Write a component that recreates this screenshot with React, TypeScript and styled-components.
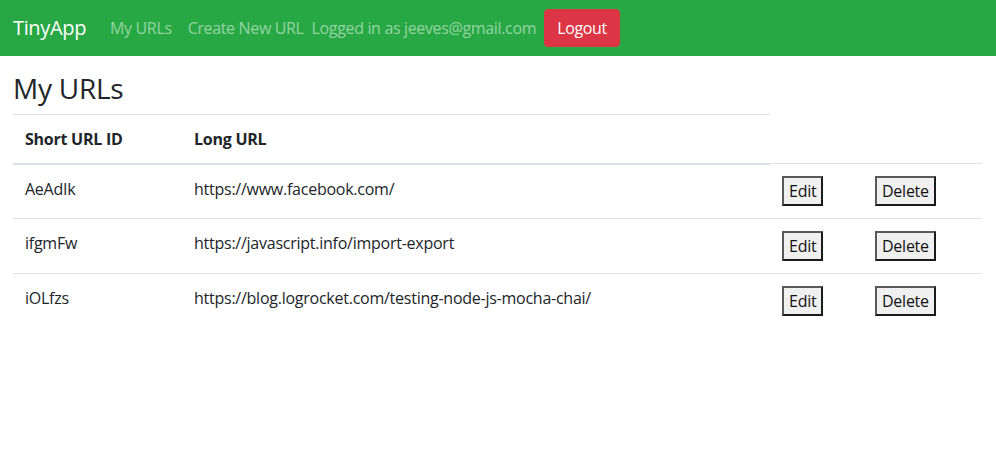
import React from 'react';
import styled, { createGlobalStyle } from 'styled-components';

const GlobalStyle = createGlobalStyle`
  body {
    margin: 0;
    font-family: "Open Sans", "Noto Sans", Arial, sans-serif;
    font-size: 16px;
    line-height: 1.5;
    letter-spacing: -0.25px;
    color: #212529;
    background: #fff;
  }
  * { box-sizing: border-box; }
`;

const Navbar = styled.nav`
  display: flex;
  align-items: center;
  height: 56px;
  padding: 8px 13px;
  background: #28a745;
  letter-spacing: -0.35px;
`;

const Brand = styled.a`
  color: #fff;
  font-size: 20px;
  line-height: 30px;
  margin-right: 16px;
  text-decoration: none;
`;

const NavLink = styled.a`
  color: rgba(255, 255, 255, 0.5);
  padding: 8px;
  line-height: 24px;
  text-decoration: none;
`;

const UserText = styled.span`
  color: rgba(255, 255, 255, 0.5);
  line-height: 24px;
`;

const LogoutButton = styled.button`
  margin-left: 8px;
  height: 38px;
  padding: 6px 12px;
  border: 1px solid #dc3545;
  border-radius: 4px;
  background: #dc3545;
  color: #fff;
  font: inherit;
  letter-spacing: inherit;
  line-height: 24px;
`;

const Main = styled.main`
  padding: 16px 14px 0 13px;
`;

const Heading = styled.h3`
  margin: 0 0 8px;
  font-size: 28px;
  font-weight: 500;
  line-height: 1.2;
`;

const Table = styled.table`
  width: 100%;
  border-collapse: collapse;
  table-layout: fixed;
`;

const HeadCell = styled.th`
  padding: 12px;
  text-align: left;
  font-weight: 700;
  border-top: 1px solid #dee2e6;
  border-bottom: 2px solid #dee2e6;
  vertical-align: bottom;
`;

const Cell = styled.td`
  padding: 12px;
  border-top: 1px solid #dee2e6;
  vertical-align: top;
`;

const PlainButton = styled.button`
  font: inherit;
  letter-spacing: inherit;
  font-size: 16px;
  line-height: 22px;
  padding: 2px 5px;
  background: #f0f0f0;
  color: #111;
  border-style: solid;
  border-width: 2px;
  border-color: #5a5a5a #1a1a1a #1a1a1a #5a5a5a;
  border-radius: 0;
`;

const urls = [
  { id: 'AeAdIk', long: 'https://www.facebook.com/' },
  { id: 'ifgmFw', long: 'https://javascript.info/import-export' },
  { id: 'iOLfzs', long: 'https://blog.logrocket.com/testing-node-js-mocha-chai/' },
];

const App = () => (
  <>
    <GlobalStyle />
    <Navbar>
      <Brand href="#">TinyApp</Brand>
      <NavLink href="#">My URLs</NavLink>
      <NavLink href="#">Create New URL</NavLink>
      <UserText>Logged in as jeeves@gmail.com</UserText>
      <LogoutButton>Logout</LogoutButton>
    </Navbar>
    <Main>
      <Heading>My URLs</Heading>
      <Table>
        <colgroup>
          <col style={{ width: 169 }} />
          <col style={{ width: 588 }} />
          <col style={{ width: 93 }} />
          <col />
        </colgroup>
        <thead>
          <tr>
            <HeadCell>Short URL ID</HeadCell>
            <HeadCell>Long URL</HeadCell>
          </tr>
        </thead>
        <tbody>
          {urls.map((u) => (
            <tr key={u.id}>
              <Cell>{u.id}</Cell>
              <Cell>{u.long}</Cell>
              <Cell>
                <PlainButton>Edit</PlainButton>
              </Cell>
              <Cell>
                <PlainButton>Delete</PlainButton>
              </Cell>
            </tr>
          ))}
        </tbody>
      </Table>
    </Main>
  </>
);

export default App;
